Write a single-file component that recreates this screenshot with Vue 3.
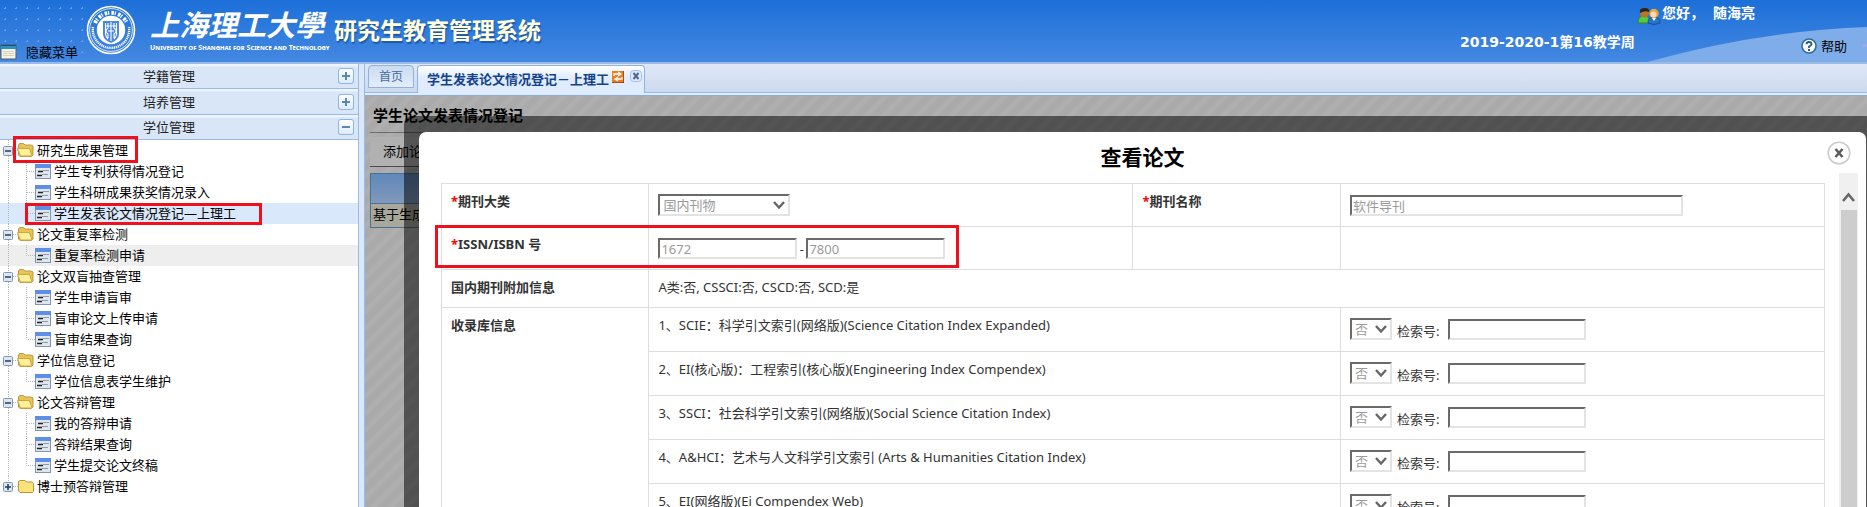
<script setup>
const sections = [
  { name: '学籍管理', open: false },
  { name: '培养管理', open: false },
  { name: '学位管理', open: true },
]

const tree = [
  { name: '研究生成果管理', open: true, marked: true, items: ['学生专利获得情况登记', '学生科研成果获奖情况录入', '学生发表论文情况登记—上理工'] },
  { name: '论文重复率检测', open: true, items: ['重复率检测申请'] },
  { name: '论文双盲抽查管理', open: true, items: ['学生申请盲审', '盲审论文上传申请', '盲审结果查询'] },
  { name: '学位信息登记', open: true, items: ['学位信息表学生维护'] },
  { name: '论文答辩管理', open: true, items: ['我的答辩申请', '答辩结果查询', '学生提交论文终稿'] },
  { name: '博士预答辩管理', open: false, items: [] },
]
const selected = '学生发表论文情况登记—上理工'
const hovered = '重复率检测申请'

const indexes = [
  '1、SCIE：科学引文索引(网络版)(Science Citation Index Expanded)',
  '2、EI(核心版)：工程索引(核心版)(Engineering Index Compendex)',
  '3、SSCI：社会科学引文索引(网络版)(Social Science Citation Index)',
  '4、A&HCI：艺术与人文科学引文索引 (Arts & Humanities Citation Index)',
  '5、EI(网络版)(Ei Compendex Web)',
]
</script>

<template>
  <div class="page">
    <header class="header">
      <svg class="wave" viewBox="0 0 220 35" preserveAspectRatio="none" aria-hidden="true">
        <path d="M0 35 Q110 4 220 0 V35 Z" fill="#7eade9" />
      </svg>
      <div class="corner">
        <button class="hide-menu" type="button">
          <svg width="17" height="16" viewBox="0 0 17 16" aria-hidden="true">
            <rect x="1" y="1" width="15" height="14" fill="#f4f2e4" stroke="#4a5a66" />
            <rect x="1" y="1" width="15" height="4" fill="#2d8fc0" />
            <rect x="1" y="1" width="15" height="1" fill="#1d4f78" />
            <path d="M3 7.5H14M3 9.5H14M3 11.5H14" stroke="#d8d4bc" />
          </svg>
          <span>隐藏菜单</span>
        </button>
      </div>
      <div class="brand">
        <svg width="50" height="50" viewBox="0 0 50 50" aria-hidden="true">
          <circle cx="25" cy="25" r="23.5" fill="none" stroke="#fff" stroke-width="1.6" />
          <circle cx="25" cy="25" r="21.4" fill="none" stroke="#fff" stroke-width=".8" />
          <path d="M9 18A17.6 17.6 0 0 1 41 18" fill="none" stroke="#fff" stroke-width="4" stroke-dasharray="2.6 .8 1.2 2.2" />
          <path d="M7 22A18.2 18.2 0 1 0 43 22" fill="none" stroke="#fff" stroke-width="2.4" stroke-dasharray="1.2 .7" />
          <circle cx="25" cy="25" r="14.2" fill="#fff" />
          <path d="M17 16H33V29Q33 35 25 38Q17 35 17 29Z" fill="#4b88dd" />
          <path d="M19.5 18V29Q20 32 22 34M22 18V23Q18 26 22 29V33M25 17V36M28 18V23Q32 26 28 29V33M30.500 18V29Q30 32 28 34M20 21H30M22 26H28" fill="none" stroke="#fff" stroke-width="1.100" />
        </svg>
        <div class="wordmark">
          <span class="school">上海理工大學</span>
          <span class="school-en">University of Shanghai for Science and Technology</span>
        </div>
        <h1 class="system">研究生教育管理系统</h1>
      </div>
      <div class="user">
        <p class="hello">
          <svg width="24" height="18" viewBox="0 0 24 18" aria-hidden="true">
            <path d="M1 16Q1 9 7 9T13 16Z" fill="#55c93c" stroke="#2d8f2a" />
            <circle cx="7.500" cy="6" r="4.500" fill="#b9762a" />
            <path d="M3 6Q2 1 7.500 1T12 5Q8 3 3 6Z" fill="#2b2414" />
            <path d="M11 16Q11 10 17 10T23 16Q17 19 11 16Z" fill="#2a74cf" stroke="#184f9d" />
            <circle cx="17" cy="6.500" r="4.700" fill="#e8a53a" />
            <circle cx="16.500" cy="7.500" r="3" fill="#f9d9ae" />
            <path d="M15 11L17 14L19 11Z" fill="#fff" />
          </svg>
          <span>您好，</span>
          <span class="name">随海亮</span>
        </p>
        <p class="week">2019-2020-1第16教学周</p>
      </div>
      <a class="help" href="#">
        <svg width="16" height="16" viewBox="0 0 16 16" aria-hidden="true">
          <circle cx="8" cy="8" r="7" fill="#fff" stroke="#2d6c96" stroke-width="1.600" />
          <path d="M5.500 6.300Q5.500 4 8 4T10.500 6.200Q10.500 7.500 8 8.500V10" fill="none" stroke="#1d5f90" stroke-width="1.800" />
          <rect x="7" y="11" width="2" height="2" fill="#1d5f90" />
        </svg>
        <span>帮助</span>
      </a>
      <i class="dash"></i>
    </header>

    <div class="body">
      <nav class="sidebar">
        <div v-for="s in sections" :key="s.name" class="section">
          <span class="section-name">{{ s.name }}</span>
          <button class="expander" type="button" :aria-label="s.name">
            <svg width="16" height="16" viewBox="0 0 16 16" aria-hidden="true">
              <path d="M4 8H12" stroke="#5b86b5" stroke-width="2" />
              <path v-if="!s.open" d="M8 4V12" stroke="#5b86b5" stroke-width="2" />
            </svg>
          </button>
        </div>
        <div class="tree">
          <template v-for="g in tree" :key="g.name">
            <div class="row">
              <svg class="branch" width="35" height="21" viewBox="0 0 35 21" aria-hidden="true">
                <path :d="g.open ? 'M8.500 0V21' : 'M8.500 0V10'" stroke="#b8b8b8" stroke-dasharray="1 1" />
                <path d="M13 10.500H18" stroke="#b8b8b8" stroke-dasharray="1 1" />
                <rect x="3.500" y="6.500" width="9" height="9" rx="1" fill="#dde6ee" stroke="#7e98b3" />
                <path d="M5 11H11" stroke="#223c60" stroke-width="1.500" />
                <path v-if="!g.open" d="M8 8V14" stroke="#223c60" stroke-width="1.500" />
                <path v-if="g.open" d="M18.500 8V15L20 16.500H31L33 15V6L31 5H25L23.500 3.500H19.500L18.500 5Z" fill="#e8c455" stroke="#b99a48" />
                <path v-if="g.open" d="M17.500 8.500H29.500L32 16H20.500Z" fill="#fff09a" stroke="#d0a743" />
                <path v-if="!g.open" d="M18.500 15V5.500L20 4.500H25L26.500 6H32L33.500 7.500V15.500L32.500 16.500H20Z" fill="#fce27a" stroke="#bd9430" />
              </svg>
              <a href="#" class="node">{{ g.name }}</a>
              <i v-if="g.marked" class="mark mark-group"></i>
            </div>
            <div v-for="(item, i) in g.items" :key="item" class="row" :class="{ selected: item === selected, hovered: item === hovered }">
              <svg class="branch" width="52" height="21" viewBox="0 0 52 21" aria-hidden="true">
                <path d="M8.500 0V21" stroke="#b8b8b8" stroke-dasharray="1 1" />
                <path :d="i === g.items.length - 1 ? 'M26.500 0V10.500H35' : 'M26.500 0V21M27 10.500H35'" fill="none" stroke="#b8b8b8" stroke-dasharray="1 1" />
                <rect x="35" y="3" width="16" height="15" fill="#8296b4" />
                <rect x="36" y="7" width="14" height="10" fill="#dfe6ee" />
                <rect x="35" y="3" width="16" height="4" fill="#5f8ee6" />
                <path d="M38 10.500H43M37 14.500H42" stroke="#222" stroke-width="1.500" />
                <path d="M43 9.500H49M42 13.500H48" stroke="#8d9baa" />
              </svg>
              <a href="#" class="node">{{ item }}</a>
              <i v-if="item === selected" class="mark mark-item"></i>
            </div>
          </template>
        </div>
      </nav>

      <main class="main">
        <div class="tabs">
          <button class="tab" type="button">首页</button>
          <div class="tab active">
            <span>学生发表论文情况登记－上理工</span>
            <svg width="12" height="12" viewBox="0 0 12 12" aria-hidden="true">
              <rect width="12" height="12" fill="#f07b1d" />
              <path d="M12 0V12H0" fill="none" stroke="#4b2a1c" />
              <path d="M2 5V3H8M6 1L9 3L6 5M10 6V8H4M6 6L3 8L6 10" fill="none" stroke="#fff" stroke-width="1.300" />
            </svg>
            <button class="tab-close" type="button" aria-label="关闭">
              <svg width="12" height="12" viewBox="0 0 12 12" aria-hidden="true">
                <rect x=".5" y=".5" width="11" height="11" rx="3" fill="#dce9f8" stroke="#a6c1e3" />
                <path d="M3.500 3L8.500 9M8.500 3L3.500 9" stroke="#4d6b91" stroke-width="2" />
              </svg>
            </button>
          </div>
        </div>

        <section class="content">
          <h2 class="heading">学生论文发表情况登记</h2>
          <div class="toolbar"><button type="button">添加论文</button></div>
          <div class="behind">
            <div class="behind-head"></div>
            <div class="behind-row">基于生成</div>
          </div>

          <div class="frame">
            <div class="dialog" role="dialog" aria-label="查看论文">
              <h3 class="dialog-title">查看论文</h3>
              <button class="dialog-close" type="button" aria-label="关闭窗口">
                <svg width="24" height="24" viewBox="0 0 24 24" aria-hidden="true">
                  <circle cx="12" cy="12" r="10.800" fill="#fff" stroke="#ccc" stroke-width="1.600" />
                  <path d="M8.500 8L15.500 16M15.500 8L8.500 16" stroke="#5c5c5c" stroke-width="2.600" />
                </svg>
              </button>
              <div class="scrollbar" aria-hidden="true">
                <svg width="19" height="37" viewBox="0 0 19 37">
                  <path d="M4 28L9.500 21.500L15 28" fill="none" stroke="#666" stroke-width="2.600" />
                </svg>
                <i class="thumb"></i>
              </div>

              <div class="form">
                <table>
                  <colgroup><col class="c-label" /><col class="c-value" /><col class="c-label" /><col class="c-value" /></colgroup>
                  <tbody>
                    <tr class="tall">
                      <th><label for="kind"><em>*</em>期刊大类</label></th>
                      <td>
                        <div class="line">
                          <span class="select wide">
                            <select id="kind" disabled><option>国内刊物</option></select>
                            <svg width="14" height="10" viewBox="0 0 14 10" aria-hidden="true"><path d="M2 2L7 7.500L12 2" fill="none" stroke="#666" stroke-width="2.400" /></svg>
                          </span>
                        </div>
                      </td>
                      <th><label for="journal"><em>*</em>期刊名称</label></th>
                      <td><div class="line"><input id="journal" class="journal" type="text" value="软件导刊" disabled /></div></td>
                    </tr>
                    <tr class="tall marked-row">
                      <th><label for="issn1"><em>*</em>ISSN/ISBN 号</label><i class="mark mark-issn"></i></th>
                      <td>
                        <div class="line">
                          <input id="issn1" class="code" type="text" value="1672" disabled />
                          <span class="hyphen">-</span>
                          <input class="code" type="text" value="7800" aria-label="ISSN/ISBN 号" disabled />
                        </div>
                      </td>
                      <td></td>
                      <td></td>
                    </tr>
                    <tr class="info">
                      <th>国内期刊附加信息</th>
                      <td colspan="3">A类:否, CSSCI:否, CSCD:否, SCD:是</td>
                    </tr>
                    <tr v-for="(name, i) in indexes" :key="name" class="index">
                      <th v-if="i === 0" :rowspan="indexes.length">收录库信息</th>
                      <td colspan="2">{{ name }}</td>
                      <td>
                        <div class="line">
                          <span class="select">
                            <select :aria-label="name" disabled><option>否</option></select>
                            <svg width="14" height="10" viewBox="0 0 14 10" aria-hidden="true"><path d="M2 2L7 7.500L12 2" fill="none" stroke="#666" stroke-width="2.400" /></svg>
                          </span>
                          <label :for="'no' + i">检索号:</label>
                          <input :id="'no' + i" class="number" type="text" disabled />
                        </div>
                      </td>
                    </tr>
                  </tbody>
                </table>
              </div>
            </div>
          </div>
        </section>
      </main>
    </div>
  </div>
</template>

<style>
body {
  overflow: hidden;
}
</style>

<style scoped>
.page {
  height: 100vh;
  display: flex;
  flex-direction: column;
  overflow: hidden;
  font: 13px/20px "Noto Sans", "Noto Sans CJK SC", sans-serif;
  color: #000;
  background: #fff;
}
.page * { box-sizing: border-box; }
h1, h2, h3, p { margin: 0; }
button { margin: 0; padding: 0; border: 0; background: none; font: inherit; color: inherit; }
a { color: inherit; text-decoration: none; }
svg { display: block; flex: none; }

.header {
  position: relative;
  flex: none;
  height: 64px;
  display: flex;
  background: linear-gradient(#1c6fd8, #4488e2);
  border-bottom: 2px solid #99bbe8;
}
.wave { position: absolute; right: 0; bottom: 0; width: 220px; height: 35px; }
.corner {
  width: 86px;
  flex: none;
  display: flex;
  align-items: flex-end;
  background: radial-gradient(circle, #6a9fea 0 1px, transparent 1px) 0 3px / 11px 11px;
}
.hide-menu { display: flex; align-items: center; gap: 9px; white-space: nowrap; }
.brand { display: flex; align-items: flex-start; padding-top: 5px; }
.brand svg { margin-right: 14px; }
.wordmark { display: flex; flex-direction: column; width: 177px; color: #fff; white-space: nowrap; }
.school { font: italic 700 29px/36px "Noto Sans CJK TC", sans-serif; }
.school-en { font: 700 7px/14px "Noto Sans", sans-serif; font-variant: small-caps; }
.system {
  margin: 6px 0 0 7px;
  font: 700 23px/36px "Noto Sans CJK SC", sans-serif;
  color: #ffffde;
  text-shadow: 1px 2px 1px #2058a8;
  white-space: nowrap;
}
.user { position: relative; margin-left: auto; width: 299px; color: #fff; font: 700 14px/20px "DejaVu Sans", "Noto Sans CJK SC", sans-serif; white-space: nowrap; }
.hello { display: flex; align-items: center; height: 25px; margin-left: 177px; }
.hello svg { margin: 6px 1px 0 0; }
.hello .name { margin-left: 9px; }
.week { margin: 7px 0 0; }
.help { position: relative; display: flex; align-items: center; gap: 4px; width: 60px; height: 28px; margin: 32px 0 0 42px; white-space: nowrap; }
.dash { position: relative; width: 4px; height: 3px; margin: 44px 0 0 2px; background: #a9a2f3; }

.body { flex: 1; min-height: 0; display: flex; }
.sidebar { width: 359px; flex: none; border-right: 1px solid #99bbe8; overflow: hidden; }
.section {
  height: 25px;
  display: flex;
  align-items: center;
  background: linear-gradient(#eef4fc 0 2px, #d9e6f7 3px);
  border-bottom: 1px solid #99bbe8;
}
.section:nth-child(2) { height: 26px; }
.section-name { flex: 1; text-align: center; color: #222; }
.expander { width: 16px; height: 16px; margin-right: 4px; border-radius: 3px; background: linear-gradient(#fff, #dceafa); box-shadow: 0 0 0 1px #8fb5e3 inset; }
.row { position: relative; height: 21px; display: flex; align-items: center; gap: 2px; white-space: nowrap; }
.node { padding-bottom: 2px; }
.row.selected { background: #d9e8fb; }
.row.hovered { background: #eee; }
.mark { position: absolute; border: 3px solid #ed111c; pointer-events: none; z-index: 5; }
.mark-group { left: 13px; top: -4px; width: 125px; height: 27px; }
.mark-item { left: 25px; top: 0; width: 237px; height: 22px; }

.main { flex: 1; min-width: 0; display: flex; flex-direction: column; margin-left: 5px; border-left: 1px solid #99bbe8; box-shadow: -5px 0 #dce8f8; }
.tabs { flex: none; height: 29px; display: flex; align-items: flex-start; gap: 3px; padding: 1px 3px 0; background: linear-gradient(#dfe8f6, #ccdaee); border-bottom: 1px solid #99bbe8; white-space: nowrap; }
.tab { height: 23px; padding: 0 10px; border: 1px solid #8db2e3; border-radius: 4px 4px 0 0; background: linear-gradient(#cbdbf0, #e4eefb); color: #416da3; font-size: 12px; }
.tab.active { display: flex; align-items: center; height: 28px; padding: 0 2px 2px 9px; border-bottom: 0; background: linear-gradient(#fff, #deecfd 12px); color: #15428b; font-size: 13px; font-weight: 700; }
.tab.active > svg { margin: 0 0 4px 3px; }
.tab-close { margin: 0 0 6px 6px; }

.content {
  position: relative;
  flex: 1;
  margin-top: 2px;
  padding: 0 5px;
  border-top: 1px solid #8eadd4;
  background: repeating-linear-gradient(135deg, #aaa 0 5px, #afafaf 7px 10px, #aaa 12px);
  box-shadow: 0 -2px #deecfd;
  overflow: hidden;
}
.heading { height: 37px; padding: 7px 0 0 3px; border-bottom: 1px solid #6c6c6c; font-size: 15px; line-height: 24px; }
.toolbar { height: 30px; margin-top: 4px; border-bottom: 1px solid #4c4c4c; background: #b1b1b1; }
.toolbar button { padding: 4px 13px; }
.behind { margin-top: 6px; border: 1px solid #467295; background: #aaa79d; white-space: nowrap; }
.behind-head { height: 30px; background: linear-gradient(#5f88bb, #8299bb); border-bottom: 1px solid #467295; }
.behind-row { height: 23px; padding-left: 2px; line-height: 21px; }

.frame { position: absolute; left: 39px; top: 20px; right: 0; bottom: 0; padding: 16px 1px 0 15px; border-radius: 8px 0 0 0; background: rgba(0, 0, 0, 0.52); }
.dialog { position: relative; height: 100%; background: #fff; border-radius: 7px 7px 0 0; overflow: hidden; color: #333; }
.dialog-title { padding: 9px 0 10px; text-align: center; color: #000; font-size: 21px; line-height: 32px; }
.dialog-close { position: absolute; right: 15px; top: 9px; }
.scrollbar { position: absolute; right: 8px; top: 41px; bottom: 0; width: 19px; background: #f0f0f0; }
.thumb { display: block; height: 100%; margin: 0 1px 0 2px; background: #cdcdcd; }

.form { padding: 0 41px 0 22px; }
table { width: 100%; table-layout: fixed; border-collapse: collapse; }
.c-label { width: 15%; }
.c-value { width: 35%; }
th, td { border: 1px solid #ddd; padding: 7px 8px 7px 9px; text-align: left; vertical-align: top; font-weight: 400; }
th { font-weight: 700; }
em { color: #f00; font-style: normal; }
.tall { height: 43px; }
.info { height: 38px; }
.index { height: 44px; }
.marked-row th { position: relative; }
.mark-issn { left: -7px; top: -2px; width: 524px; height: 43px; }
.line { display: flex; align-items: flex-end; padding-top: 3px; }

input, select {
  margin: 0;
  border: 2px solid;
  border-color: #6a6a6a #e3e3e3 #e3e3e3 #6a6a6a;
  border-radius: 0;
  background: #fff;
  color: #9a9a9a;
  font: 13px/18px "Noto Sans", "Noto Sans CJK SC", sans-serif;
  opacity: 1;
}
input { height: 21px; padding: 0 1px; }
.journal { width: 333px; margin-top: 1px; }
.code { width: 139px; margin-top: 1px; }
.number { width: 138px; }
.hyphen { width: 9px; text-align: center; }
.select { position: relative; display: block; width: 42px; height: 22px; }
.select.wide { width: 132px; }
.select select { display: block; width: 100%; height: 22px; padding: 0 3px; appearance: none; }
.select svg { position: absolute; right: 4px; top: 6px; }
.index label { padding: 0 9px 0 5px; line-height: 18px; white-space: nowrap; }
</style>
